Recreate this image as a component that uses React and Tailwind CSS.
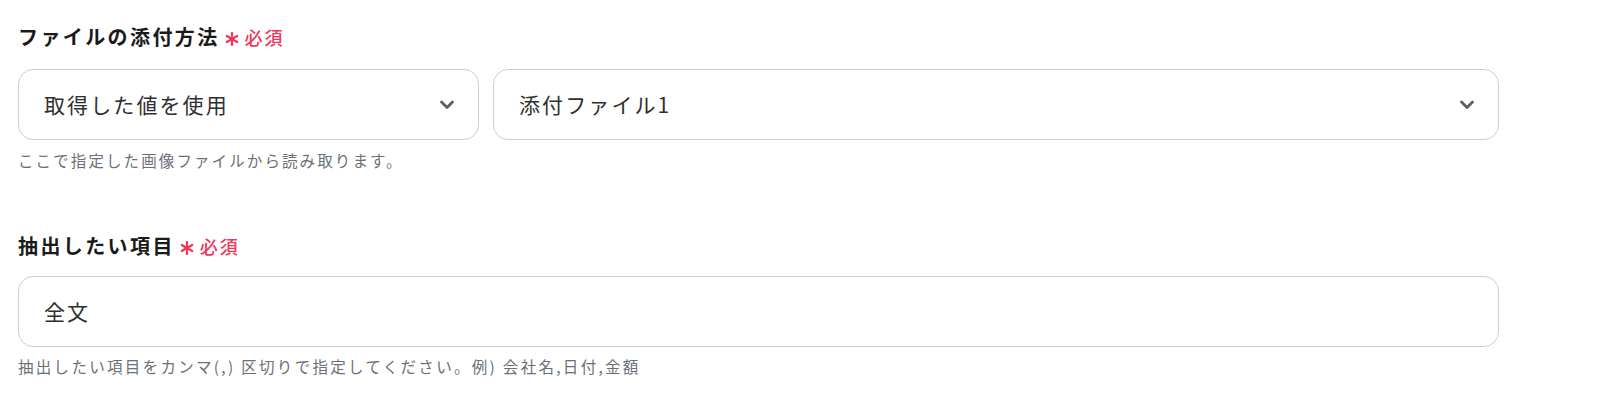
import React from "react";

const font = { fontFamily: '"Noto Sans CJK JP", "Noto Sans", sans-serif' };

function Chevron() {
  return (
    <svg width="16" height="10" viewBox="0 0 16 10" className="shrink-0">
      <polyline points="2.5,2 8,7.5 13.5,2" fill="none" stroke="#5f5f5f" strokeWidth="2.8" strokeLinecap="round" strokeLinejoin="round" />
    </svg>
  );
}

function Asterisk() {
  return (
    <svg width="14" height="14" viewBox="0 0 14 14" className="shrink-0">
      <g stroke="#f0365a" strokeWidth="2.2" strokeLinecap="round">
        <line x1="7" y1="1" x2="7" y2="13" />
        <line x1="1.8" y1="4" x2="12.2" y2="10" />
        <line x1="1.8" y1="10" x2="12.2" y2="4" />
      </g>
    </svg>
  );
}

function Label({ children }) {
  return (
    <div className="flex items-center h-[30px]">
      <span className="text-[20px] font-bold text-[#1a1a1a] tracking-[2.4px]">{children}</span>
      <span className="ml-[5px] mt-[3px]">
        <Asterisk />
      </span>
      <span className="ml-[6px] text-[18px] font-medium text-[#f0365a] tracking-[2px]">必須</span>
    </div>
  );
}

function Select({ value, className }) {
  return (
    <div className={"h-[71px] rounded-[15px] border border-[#c9ced6] bg-white flex items-center justify-between pl-[25px] pr-[23px] " + className}>
      <span className="text-[21px] text-[#2f2f2f] tracking-[2.1px]">{value}</span>
      <Chevron />
    </div>
  );
}

export default function App() {
  return (
    <div className="bg-white w-[1600px] h-[407px] pt-[22px] px-[18px]" style={font}>
      <Label>ファイルの添付方法</Label>
      <div className="mt-[17px] flex gap-[14px] w-[1481px]">
        <Select value="取得した値を使用" className="w-[461px]" />
        <Select value="添付ファイル1" className="flex-1" />
      </div>
      <div className="mt-[11px] h-[20px] flex items-center text-[15.5px] text-[#6b7078] tracking-[2.1px]">
        ここで指定した画像ファイルから読み取ります。
      </div>

      <div className="mt-[60px]">
        <Label>抽出したい項目</Label>
      </div>
      <div className="mt-[15px] w-[1481px] h-[71px] rounded-[15px] border border-[#c9ced6] bg-white flex items-center pl-[25px]">
        <span className="text-[21px] text-[#2f2f2f] tracking-[2.1px]">全文</span>
      </div>
      <div className="mt-[10px] h-[20px] flex items-center text-[15.5px] text-[#6b7078] tracking-[2.3px]">
        抽出したい項目をカンマ(,) 区切りで指定してください。例) 会社名,日付,金額
      </div>
    </div>
  );
}
